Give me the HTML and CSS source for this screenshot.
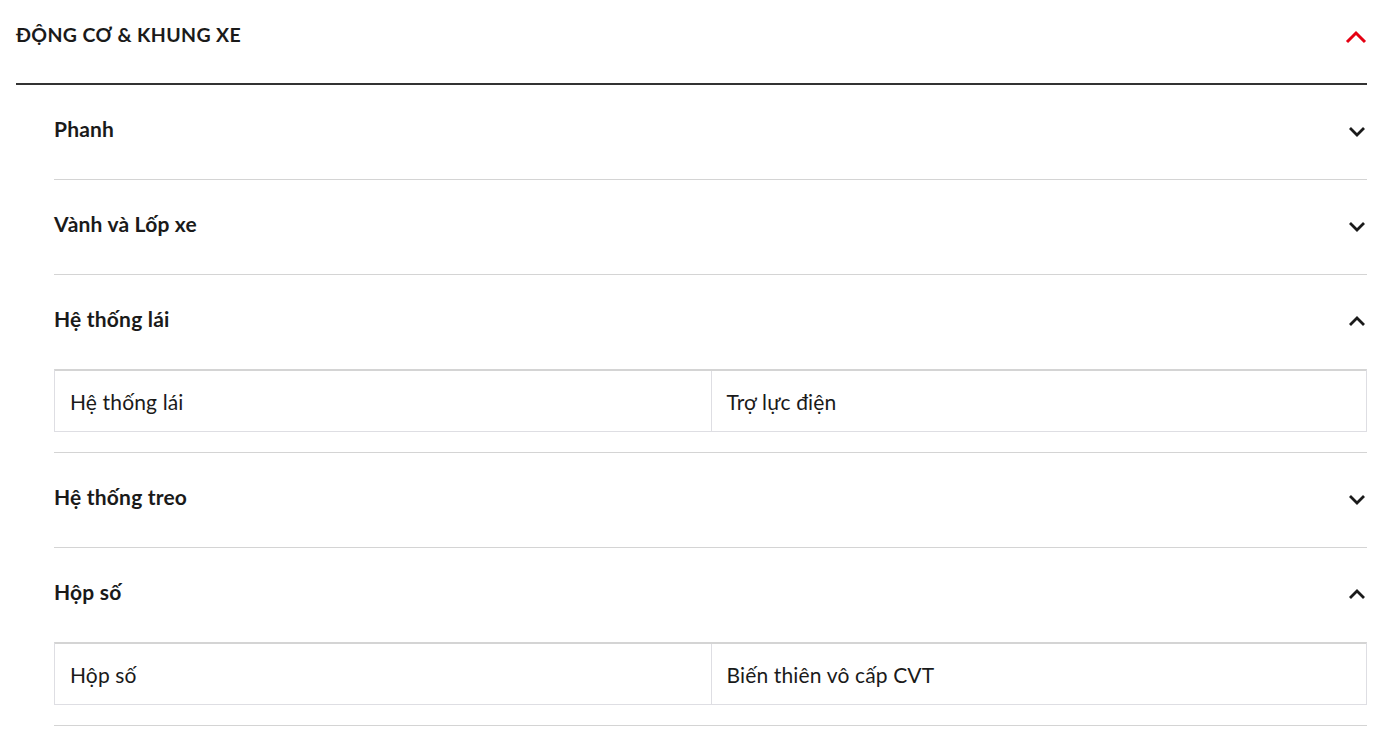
FILE: index.html
```html
<!DOCTYPE html>
<html lang="vi">
<head>
<meta charset="utf-8">
<link rel="stylesheet" href="styles.css">
</head>
<body>
<section class="spec">
  <div class="spec-head">
    <h2 class="spec-title">ĐỘNG CƠ &amp; KHUNG XE</h2>
    <svg class="chev chev-red" width="22" height="14" viewBox="0 0 22 14"><path d="M2 12 L11 3 L20 12" fill="none" stroke="#e50012" stroke-width="3"/></svg>
  </div>
  <div class="spec-body">
    <div class="item">
      <div class="item-head"><span class="item-title">Phanh</span><svg class="chev" width="18" height="12" viewBox="0 0 18 12"><path d="M2 3 L9 10 L16 3" fill="none" stroke="#1a1a1a" stroke-width="2.8"/></svg></div>
    </div>
    <div class="item">
      <div class="item-head"><span class="item-title">Vành và Lốp xe</span><svg class="chev" width="18" height="12" viewBox="0 0 18 12"><path d="M2 3 L9 10 L16 3" fill="none" stroke="#1a1a1a" stroke-width="2.8"/></svg></div>
    </div>
    <div class="item open">
      <div class="item-head"><span class="item-title">Hệ thống lái</span><svg class="chev" width="18" height="12" viewBox="0 0 18 12"><path d="M2 10 L9 3 L16 10" fill="none" stroke="#1a1a1a" stroke-width="2.8"/></svg></div>
      <div class="table">
        <div class="cell">Hệ thống lái</div>
        <div class="cell">Trợ lực điện</div>
      </div>
    </div>
    <div class="item">
      <div class="item-head"><span class="item-title">Hệ thống treo</span><svg class="chev" width="18" height="12" viewBox="0 0 18 12"><path d="M2 3 L9 10 L16 3" fill="none" stroke="#1a1a1a" stroke-width="2.8"/></svg></div>
    </div>
    <div class="item open">
      <div class="item-head"><span class="item-title">Hộp số</span><svg class="chev" width="18" height="12" viewBox="0 0 18 12"><path d="M2 10 L9 3 L16 10" fill="none" stroke="#1a1a1a" stroke-width="2.8"/></svg></div>
      <div class="table">
        <div class="cell">Hộp số</div>
        <div class="cell">Biến thiên vô cấp CVT</div>
      </div>
    </div>
  </div>
</section>
</body>
</html>
```
FILE: styles.css
```css
* { box-sizing: border-box; }
html, body { margin: 0; padding: 0; background: #fff; }
body {
  font-family: Lato, "Noto Sans", sans-serif;
  color: #1a1a1a;
}
.spec { padding: 0 16px; }
.spec-head {
  display: flex;
  align-items: center;
  justify-content: space-between;
  height: 85px;
  border-bottom: 2px solid #333;
  padding-bottom: 14px;
}
.spec-title {
  margin: 0;
  font-size: 19.5px;
  font-weight: 700;
  letter-spacing: 0.35px;
  color: #1a1a1a;
}
.chev-red { margin-top: 4px; }
.spec-body { padding-left: 38px; }
.item { border-bottom: 1px solid #d4d4d4; }
.item.open { padding-bottom: 20px; }
.item-head {
  display: flex;
  align-items: center;
  justify-content: space-between;
  height: 94px;
  padding-bottom: 8px;
}
.item-title { font-size: 21px; font-weight: 700; color: #1a1a1a; letter-spacing: 0.2px; }
.item-head .chev { margin-right: 1px; margin-top: 6px; }
.table {
  display: grid;
  grid-template-columns: 1fr 1fr;
  border: 1px solid #dedee3;
  border-top: 2px solid #d4d4d4;
  height: 63px;
}
.cell {
  display: flex;
  align-items: center;
  padding: 0 15px;
  font-size: 21px;
  letter-spacing: 0.15px;
  color: #1a1a1a;
}
.cell + .cell { border-left: 1px solid #dedee3; }
```
